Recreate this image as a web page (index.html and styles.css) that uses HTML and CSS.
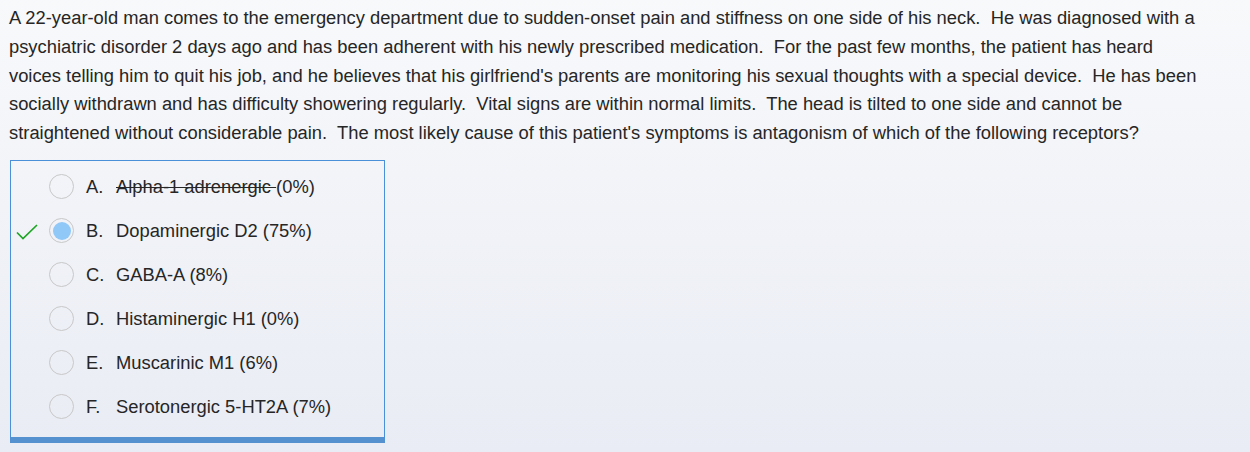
FILE: index.html
```html
<!DOCTYPE html>
<html>
<head>
<meta charset="utf-8">
<link rel="stylesheet" href="styles.css">
</head>
<body>
<div class="page">
  <p class="stem">A 22-year-old man comes to the emergency department due to sudden-onset pain and stiffness on one side of his neck.&nbsp; He was diagnosed with a psychiatric disorder 2 days ago and has been adherent with his newly prescribed medication.&nbsp; For the past few months, the patient has heard voices telling him to quit his job, and he believes that his girlfriend's parents are monitoring his sexual thoughts with a special device.&nbsp; He has been socially withdrawn and has difficulty showering regularly.&nbsp; Vital signs are within normal limits.&nbsp; The head is tilted to one side and cannot be straightened without considerable pain.&nbsp; The most likely cause of this patient's symptoms is antagonism of which of the following receptors?</p>
  <div class="choices">
    <div class="choice">
      <span class="mark"></span>
      <span class="radio"></span>
      <span class="letter">A.</span>
      <span class="label"><s>Alpha-1 adrenergic </s>(0%)</span>
    </div>
    <div class="choice">
      <span class="mark"><svg width="22" height="16" viewBox="0 0 22 16"><path d="M1 8.5 L7 14.5 L21 1" fill="none" stroke="#1fa524" stroke-width="1.7"/></svg></span>
      <span class="radio checked"></span>
      <span class="letter">B.</span>
      <span class="label">Dopaminergic D2 (75%)</span>
    </div>
    <div class="choice">
      <span class="mark"></span>
      <span class="radio"></span>
      <span class="letter">C.</span>
      <span class="label">GABA-A (8%)</span>
    </div>
    <div class="choice">
      <span class="mark"></span>
      <span class="radio"></span>
      <span class="letter">D.</span>
      <span class="label">Histaminergic H1 (0%)</span>
    </div>
    <div class="choice">
      <span class="mark"></span>
      <span class="radio"></span>
      <span class="letter">E.</span>
      <span class="label">Muscarinic M1 (6%)</span>
    </div>
    <div class="choice">
      <span class="mark"></span>
      <span class="radio"></span>
      <span class="letter">F.</span>
      <span class="label">Serotonergic 5-HT2A (7%)</span>
    </div>
  </div>
</div>
</body>
</html>
```

FILE: styles.css
```css
html, body {
  margin: 0;
  padding: 0;
  height: 100%;
}
body {
  background: linear-gradient(to bottom, #f8f9fb 0%, #e9ecf4 100%);
  font-family: "Liberation Sans", Arial, sans-serif;
  color: #262626;
}
.page {
  padding: 4px 0 0 9px;
}
.stem {
  margin: 0;
  width: 1200px;
  font-size: 18.35px;
  line-height: 28.75px;
}
.choices {
  margin-top: 12px;
  margin-left: 1px;
  width: 373px;
  border: 1px solid #4a90d9;
  border-bottom: 6px solid #5590cf;
  padding: 4px 0 8px 0;
}
.choice {
  display: flex;
  align-items: center;
  height: 44px;
  font-size: 18.35px;
}
.mark {
  width: 27px;
  padding-right: 11px;
  display: flex;
  justify-content: flex-end;
}
.mark svg {
  display: block;
  margin-top: 2px;
}
.radio {
  width: 23px;
  height: 23px;
  border: 1.5px solid #c8c8c8;
  border-radius: 50%;
  position: relative;
  flex: none;
}
.radio.checked::after {
  content: "";
  position: absolute;
  left: 2.5px;
  top: 2.5px;
  width: 18px;
  height: 18px;
  border-radius: 50%;
  background: #90c8f8;
}
.letter {
  width: 30px;
  margin-left: 12px;
}
.label s {
  text-decoration-thickness: 1px;
}
```
